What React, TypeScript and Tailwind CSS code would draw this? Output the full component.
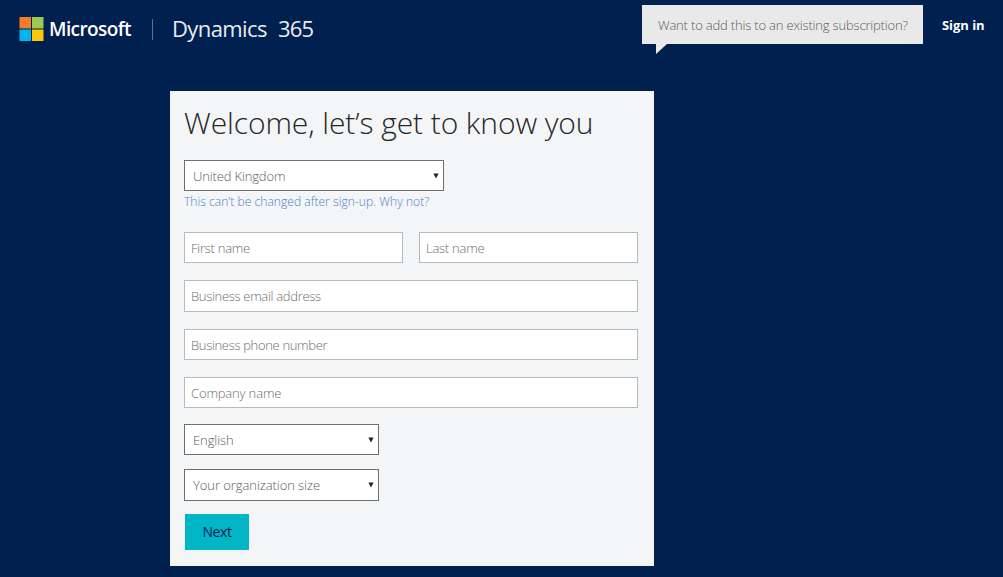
const light = "font-['Open_Sans','Noto_Sans',sans-serif] font-light";

function Caret() {
  return (
    <svg className="h-[6px] w-[6px] shrink-0" viewBox="0 0 6 6">
      <path d="M0.4 0.5H5.6L3 5.5Z" fill="#222" />
    </svg>
  );
}

function Select({ text, className }: { text: string; className: string }) {
  return (
    <button className={`flex shrink-0 items-center justify-between border border-[#6c6e70] bg-white pr-[4px] pl-[8px] text-[13px] text-[#5c5c5c] ${className}`}>
      <span className="pt-[2px]">{text}</span>
      <Caret />
    </button>
  );
}

function Field({ placeholder, className }: { placeholder: string; className: string }) {
  return (
    <input
      placeholder={placeholder}
      className={`block shrink-0 border border-[#b4babd] bg-white pl-[6px] text-[13px] placeholder:text-[#6c6c6c] placeholder:opacity-100 ${className}`}
    />
  );
}

export default function App() {
  return (
    <div className={`flex h-[577px] w-[1003px] flex-col overflow-hidden bg-[#00204f] ${light}`}>
      <header className="flex h-[91px] items-start pl-[19px]">
        <div className="flex h-[58px] items-center">
          <svg className="h-6 w-[25px]" viewBox="0 0 25 24">
            <path d="M0.5 0H12V11.5H0.5Z" fill="#f47b29" />
            <path d="M13 0H24.5V11.5H13Z" fill="#9aca50" />
            <path d="M0.5 12.5H12V24H0.5Z" fill="#00b6ee" />
            <path d="M13 12.5H24.5V24H13Z" fill="#fec60b" />
          </svg>
          <span className="ml-[5px] w-[82px] text-[19px] font-semibold tracking-[-0.6px] text-white">Microsoft</span>
          <div className="ml-[21px] h-[21px] w-px bg-[#60718e]" />
          <span className="mb-[2px] ml-[19px] w-[106px] text-[22px] font-normal tracking-[-0.6px] text-[#e8ebf0]">Dynamics</span>
          <span className="mb-[2px] text-[22px] font-normal tracking-[-0.8px] text-[#e8ebf0]">365</span>
        </div>
        <div className="ml-auto flex flex-col pt-[5px]">
          <div className="flex h-[39px] w-[281px] items-center bg-[#e9e9e9] pt-[2px] pl-[16px] text-[13px] tracking-[-0.18px] text-[#5c5c5c]">
            Want to add this to an existing subscription?
          </div>
          <svg className="ml-[14px] h-[10px] w-[11px]" viewBox="0 0 11 10">
            <path d="M0 0H11L0 10Z" fill="#e9e9e9" />
          </svg>
        </div>
        <a className="mt-[16px] mr-[18px] ml-[19px] w-[43px] text-[13px] font-bold tracking-[-0.05px] whitespace-nowrap text-white">Sign in</a>
      </header>
      <main className="ml-[170px] flex h-[475px] w-[484px] flex-col bg-[#f3f5f7] pl-[14px]">
        <h1 className="mt-[12px] h-[40px] text-[30px] leading-[40px] tracking-[-0.09px] text-[#262626]">Welcome, let’s get to know you</h1>
        <Select text="United Kingdom" className="mt-[17px] h-[31px] w-[260px] tracking-[-0.15px]" />
        <a className="mt-[2px] h-[17px] text-[12px] leading-[17px] tracking-[0.06px] text-[#4a82c8]">This can’t be changed after sign-up. Why not?</a>
        <div className="mt-[22px] flex gap-[16px]">
          <Field placeholder="First name" className="h-[31px] w-[219px] pt-px tracking-[-0.25px]" />
          <Field placeholder="Last name" className="h-[31px] w-[219px] pt-px tracking-[-0.25px]" />
        </div>
        <Field placeholder="Business email address" className="mt-[17px] h-[32px] w-[454px] tracking-[-0.31px]" />
        <Field placeholder="Business phone number" className="mt-[17px] h-[31px] w-[454px] pt-px tracking-[-0.33px]" />
        <Field placeholder="Company name" className="mt-[17px] h-[31px] w-[454px] pt-px tracking-[-0.15px]" />
        <Select text="English" className="mt-[16px] h-[31px] w-[195px] tracking-[-0.1px]" />
        <Select text="Your organization size" className="mt-[14px] h-[32px] w-[195px] tracking-[-0.07px]" />
        <button className="mt-[13px] ml-px h-[36px] w-[64px] bg-[#00b6c6] pb-px text-[14px] font-normal tracking-[-0.4px] text-[#00204f]">Next</button>
      </main>
    </div>
  );
}
